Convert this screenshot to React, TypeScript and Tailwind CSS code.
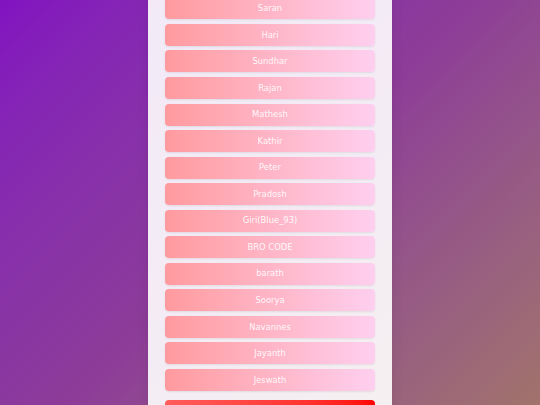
const names = [
  'Saran',
  'Hari',
  'Sundhar',
  'Rajan',
  'Mathesh',
  'Kathir',
  'Peter',
  'Pradosh',
  'Giri(Blue_93)',
  'BRO CODE',
  'barath',
  'Soorya',
  'Navannes',
  'Jayanth',
  'Jeswath',
];

export default function App() {
  return (
    <div
      className="h-[405px] w-full overflow-hidden flex items-center justify-center bg-linear-135 from-[#8212c0] via-[#8d3c98] to-[#a1736b]"
      style={{ fontFamily: '"DejaVu Sans", sans-serif' }}
    >
      <div className="w-[244px] shrink-0 bg-white/90 rounded-lg shadow-lg px-[17px] pt-[40px] pb-4 flex flex-col">
        <div className="flex flex-col gap-[4.56px]">
          {names.map(n => (
            <button
              key={n}
              className="h-[22px] w-full rounded-[4px] bg-linear-to-r from-[#ff9a9e] to-[#fecfef] text-white/95 text-[8.4px] flex items-center justify-center shadow-[0_1px_2px_rgba(0,0,0,0.08)]"
            >
              {n}
            </button>
          ))}
        </div>
        <button className="mt-[8.7px] h-[32px] w-full rounded-[4px] bg-linear-to-r from-[#ff5c5c] to-[#ff0000] text-white text-[9px] shadow-[0_1px_2px_rgba(0,0,0,0.1)]" />
      </div>
    </div>
  );
}
